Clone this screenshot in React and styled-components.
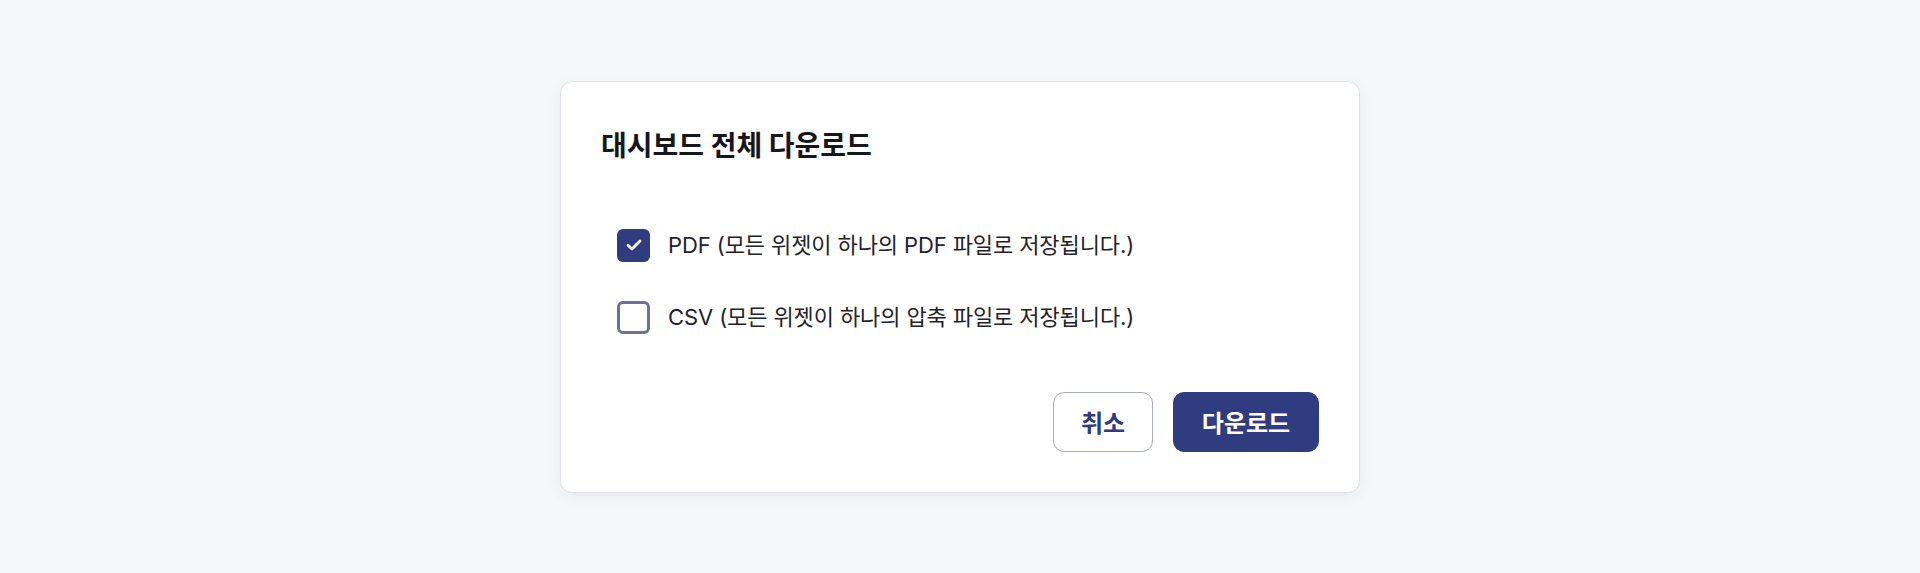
import React, { useState } from "react";
import styled, { createGlobalStyle } from "styled-components";

const Global = createGlobalStyle`
  html, body { margin: 0; padding: 0; }
  body {
    background: #f6f7f9;
    font-family: "Inter", "Noto Sans CJK KR", "Noto Sans", sans-serif;
    color: #1f2024;
  }
`;

const Page = styled.div`
  min-height: 573px;
  display: flex;
  align-items: center;
  justify-content: center;
`;

const Dialog = styled.div`
  box-sizing: border-box;
  width: 800px;
  height: 412px;
  background: #ffffff;
  border: 1px solid #e0e2e7;
  border-radius: 12px;
  box-shadow: 0 4px 14px rgba(20, 24, 40, 0.06);
  padding: 40px;
  display: flex;
  flex-direction: column;
`;

const Title = styled.h2`
  margin: 0;
  font-size: 28px;
  line-height: 48px;
  font-weight: 700;
  color: #16171b;
  letter-spacing: 0px;
`;

const Options = styled.div`
  margin-top: 59px;
  display: flex;
  flex-direction: column;
  gap: 39px;
  padding-left: 16px;
`;

const Option = styled.label`
  display: flex;
  align-items: center;
  gap: 18px;
  cursor: pointer;
  font-size: 22px;
  line-height: 33px;
  color: #222328;
  letter-spacing: -0.1px;
`;

const Box = styled.span`
  box-sizing: border-box;
  width: 33px;
  height: 33px;
  border-radius: 6px;
  display: flex;
  align-items: center;
  justify-content: center;
  flex-shrink: 0;
  background: ${(p) => (p.$checked ? "#2f3c80" : "#ffffff")};
  border: ${(p) => (p.$checked ? "none" : "3px solid #6f7191")};
`;

const Footer = styled.div`
  margin-top: auto;
  display: flex;
  justify-content: flex-end;
  gap: 20px;
`;

const Button = styled.button`
  box-sizing: border-box;
  height: 60px;
  padding: 0 26px;
  min-width: ${(p) => (p.$primary ? "146px" : "100px")};
  border-radius: 11px;
  font-family: inherit;
  font-size: 24px;
  font-weight: 700;
  cursor: pointer;
  background: ${(p) => (p.$primary ? "#2f3c80" : "#ffffff")};
  color: ${(p) => (p.$primary ? "#ffffff" : "#2f3c80")};
  border: 1px solid ${(p) => (p.$primary ? "#2f3c80" : "#a7a9c6")};
`;

const Check = () => (
  <svg width="16" height="12" viewBox="0 0 16 12" fill="none">
    <path
      d="M2 6.2 L6 10 L14 2"
      stroke="#ffffff"
      strokeWidth="2.8"
      strokeLinecap="round"
      strokeLinejoin="round"
    />
  </svg>
);

export default function App() {
  const [pdf, setPdf] = useState(true);
  const [csv, setCsv] = useState(false);
  return (
    <>
      <Global />
      <Page>
        <Dialog>
          <Title>대시보드 전체 다운로드</Title>
          <Options>
            <Option onClick={() => setPdf(!pdf)}>
              <Box $checked={pdf}>{pdf && <Check />}</Box>
              PDF (모든 위젯이 하나의 PDF 파일로 저장됩니다.)
            </Option>
            <Option onClick={() => setCsv(!csv)}>
              <Box $checked={csv}>{csv && <Check />}</Box>
              CSV (모든 위젯이 하나의 압축 파일로 저장됩니다.)
            </Option>
          </Options>
          <Footer>
            <Button>취소</Button>
            <Button $primary>다운로드</Button>
          </Footer>
        </Dialog>
      </Page>
    </>
  );
}
